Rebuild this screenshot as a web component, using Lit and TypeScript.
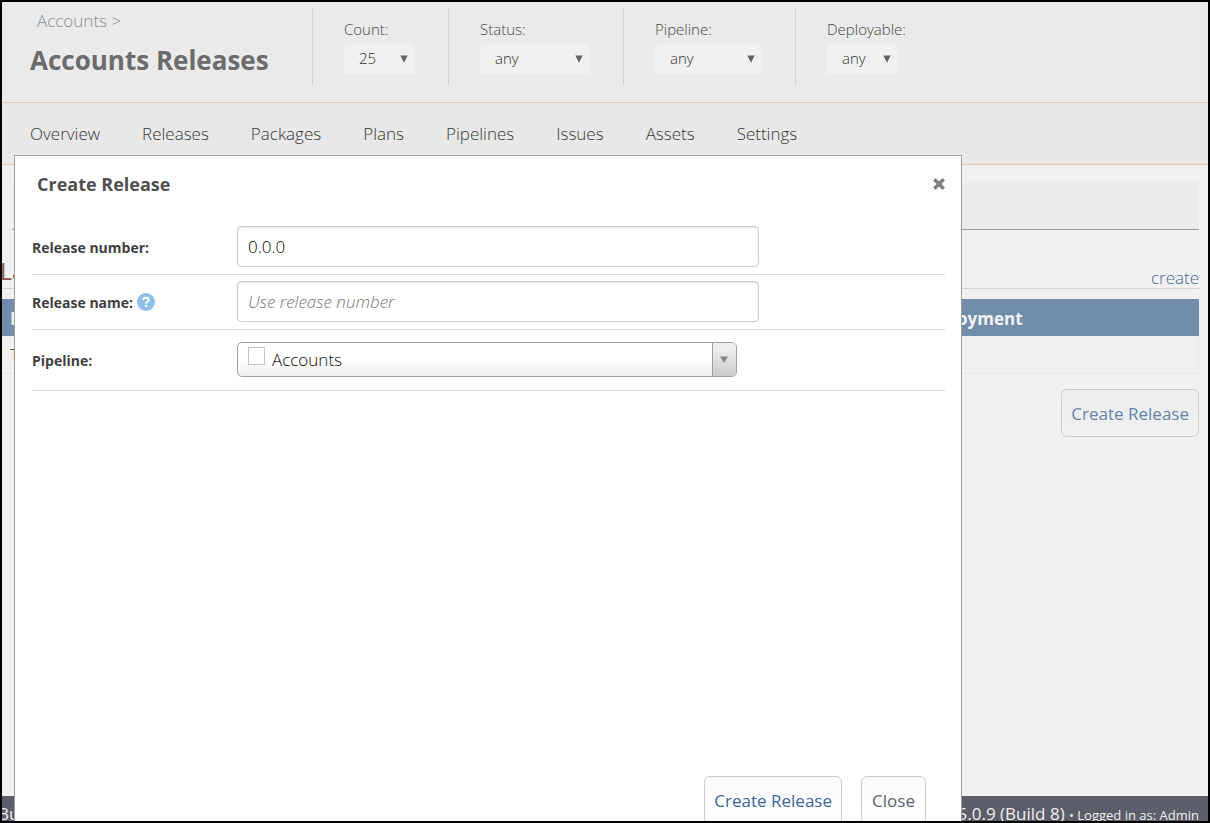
import { LitElement, html, css } from "lit";
import { customElement, property } from "lit/decorators.js";

interface Filter {
  id: string;
  label: string;
  value: string;
  size: string;
}

const FILTERS: Filter[] = [
  { id: "count", label: "Count:", value: "25", size: "s" },
  { id: "status", label: "Status:", value: "any", size: "l" },
  { id: "pipeline-filter", label: "Pipeline:", value: "any", size: "m" },
  { id: "deployable", label: "Deployable:", value: "any", size: "s" },
];

const TABS = ["Overview", "Releases", "Packages", "Plans", "Pipelines", "Issues", "Assets", "Settings"];

@customElement("release-dialog")
export class ReleaseDialog extends LitElement {
  static styles = css`
    :host {
      display: flex;
      flex-direction: column;
      box-sizing: border-box;
      background: #fff;
      border: 1px solid #a0a0a0;
      border-bottom: 0;
      padding: 11px 16px 0 17px;
      color: #3f3f3f;
      font-family: "Open Sans", "Noto Sans", sans-serif;
    }
    .head {
      display: flex;
      justify-content: space-between;
      align-items: center;
      height: 34px;
      padding-left: 5px;
      margin-bottom: 19px;
    }
    h2 {
      margin: 0;
      font-size: 18px;
      line-height: 24px;
      font-weight: 700;
      color: #505050;
    }
    button {
      font: inherit;
      cursor: pointer;
    }
    .x {
      display: flex;
      border: 0;
      padding: 0;
      background: none;
    }
    .row {
      display: grid;
      grid-template-columns: 205px minmax(0, 1fr);
      align-items: center;
      height: 54px;
      border-bottom: 1px solid #d9d9d9;
    }
    .row.tall {
      height: 60px;
    }
    .name {
      display: flex;
      align-items: center;
      gap: 4px;
      font-size: 14px;
      font-weight: 700;
    }
    .text {
      box-sizing: border-box;
      width: 100%;
      max-width: 522px;
      height: 41px;
      margin: 0 0 1px;
      padding: 0 10px;
      border: 1px solid #ccc;
      border-radius: 4px;
      box-shadow: inset 0 1px 2px #e4e4e4;
      font: 300 17px "Open Sans", sans-serif;
      color: #000;
      background: #fff;
    }
    .text::placeholder {
      font-style: italic;
      color: #777;
      opacity: 1;
    }
    .combo {
      display: flex;
      box-sizing: border-box;
      width: 100%;
      max-width: 500px;
      height: 35px;
      margin-bottom: 1px;
      border: 1px solid #a0a0a0;
      border-radius: 5px;
      overflow: hidden;
      background: linear-gradient(#fff 50%, #eee);
    }
    .combo input {
      appearance: none;
      box-sizing: border-box;
      width: 17px;
      height: 18px;
      margin: 4px 0 0 10px;
      border: 1px solid #c4c4c4;
      background: #fff;
    }
    .combo select {
      appearance: none;
      flex: 1;
      min-width: 0;
      border: 0;
      padding: 0 7px;
      background: none;
      font: 300 17px "Open Sans", sans-serif;
      color: #111;
    }
    .drop {
      display: flex;
      align-items: center;
      justify-content: center;
      box-sizing: border-box;
      width: 24px;
      padding-right: 2px;
      border-left: 1px solid #a0a0a0;
      background: linear-gradient(#eee 20%, #ccc);
      pointer-events: none;
    }
    .foot {
      display: flex;
      justify-content: flex-end;
      gap: 19px;
      margin-top: auto;
      padding-right: 19px;
    }
    .btn {
      height: 48px;
      min-width: 65px;
      padding: 0 9px;
      border: 1px solid #ccc;
      border-radius: 6px;
      background: linear-gradient(#fafafc, #fff);
      font-size: 17px;
      font-weight: 500;
      color: #5c636e;
      white-space: nowrap;
    }
    .btn.main {
      color: #3d6698;
    }
  `;

  render() {
    return html`
      <div class="head">
        <h2>Create Release</h2>
        <button class="x" aria-label="Close dialog">
          <svg width="12" height="12" viewBox="0 0 13 13">
            <path d="M2.7 2.7 10.3 10.3M10.3 2.7 2.7 10.3" stroke="#808080" stroke-width="3.8" stroke-linecap="square" />
          </svg>
        </button>
      </div>
      <div class="row">
        <label class="name" for="number">Release number:</label>
        <input class="text" id="number" type="text" value="0.0.0" />
      </div>
      <div class="row">
        <div class="name">
          <label for="name">Release name:</label>
          <svg width="18" height="18" viewBox="0 0 18 18" role="img" aria-label="Help">
            <circle cx="9" cy="9" r="9" fill="#8fbfe8" />
            <path d="M6.2 7C6.3 3.8 11.7 3.9 11.7 7 11.7 8.8 9.1 8.8 9.1 10.7" fill="none" stroke="#fff" stroke-width="2" />
            <circle cx="9.1" cy="13.1" r="1.3" fill="#fff" />
          </svg>
        </div>
        <input class="text" id="name" type="text" placeholder="Use release number" />
      </div>
      <div class="row tall">
        <label class="name" for="pipeline">Pipeline:</label>
        <div class="combo">
          <input type="checkbox" aria-label="Accounts" />
          <select id="pipeline">
            <option>Accounts</option>
          </select>
          <span class="drop">
            <svg width="8" height="7" viewBox="0 0 8 7"><path d="M0 .5H8L4 7Z" fill="#888" /></svg>
          </span>
        </div>
      </div>
      <div class="foot">
        <button class="btn main">Create Release</button>
        <button class="btn">Close</button>
      </div>
    `;
  }
}

@customElement("filter-select")
export class FilterSelect extends LitElement {
  @property({ attribute: false }) filter!: Filter;

  static styles = css`
    :host {
      display: block;
      box-sizing: border-box;
      height: 78px;
      padding: 13px 33px 0 31px;
      border-left: 1px solid #d4d4d4;
      font-family: "Open Sans", "Noto Sans", sans-serif;
      color: #484848;
    }
    label {
      display: block;
      font-size: 15px;
      line-height: 18px;
      font-weight: 300;
      margin-bottom: 6px;
    }
    .box {
      display: grid;
      align-items: center;
      height: 30px;
      border-radius: 4px;
      background: #f0f0f0;
    }
    .s {
      width: 71px;
    }
    .m {
      width: 107px;
    }
    .l {
      width: 110px;
    }
    select,
    svg {
      grid-area: 1 / 1;
    }
    select {
      appearance: none;
      width: 100%;
      height: 28px;
      align-self: start;
      border: 0;
      padding: 0 15px;
      background: none;
      font: 300 15px "Open Sans", sans-serif;
      color: #333;
    }
    svg {
      justify-self: end;
      margin-right: 7px;
      pointer-events: none;
    }
  `;

  render() {
    const f = this.filter;
    return html`
      <label for=${f.id}>${f.label}</label>
      <div class="box ${f.size}">
        <select id=${f.id}>
          <option>${f.value}</option>
        </select>
        <svg width="8" height="8" viewBox="0 0 8 8"><path d="M.3.5H7.7L4 7.8Z" fill="#636363" /></svg>
      </div>
    `;
  }
}

@customElement("app-root")
export class AppRoot extends LitElement {
  static styles = css`
    :host {
      display: block;
      font-family: "Open Sans", "Noto Sans", sans-serif;
      font-size: 17px;
      font-weight: 300;
    }
    .frame {
      position: relative;
      display: flex;
      flex-direction: column;
      box-sizing: border-box;
      height: 100vh;
      overflow: hidden;
      border: 2px solid #000;
      background: #f0f0f0;
    }
    header {
      display: flex;
      height: 100px;
      background: #eaeaea;
      border-bottom: 1px solid #f2c5b9;
    }
    .title {
      box-sizing: border-box;
      width: 310px;
      padding: 7px 0 0 28px;
    }
    .crumb {
      padding-left: 7px;
      line-height: 24px;
      color: #8e919b;
    }
    .crumb a {
      color: inherit;
      text-decoration: none;
    }
    h1 {
      margin: 9px 0 0;
      font-size: 26px;
      line-height: 36px;
      font-weight: 700;
      color: #6c6c6c;
      white-space: nowrap;
    }
    .filters {
      display: flex;
      padding-top: 5px;
    }
    nav {
      display: flex;
      gap: 42px;
      align-items: center;
      height: 61px;
      padding-left: 28px;
      background: #e8e8e8;
      border-bottom: 1px solid #f2c5b9;
    }
    nav a {
      color: #383838;
      text-decoration: none;
    }
    main {
      flex: 1;
      padding: 18px 9px 0 0;
    }
    .panel {
      height: 46px;
      margin-left: 10px;
      background: #eaeaea;
      border-bottom: 1px solid #98a3b0;
    }
    .section {
      display: flex;
      justify-content: space-between;
      align-items: flex-end;
      height: 58px;
      border-bottom: 1px solid #d4d4d4;
      margin-bottom: 10px;
    }
    .section h3 {
      margin: 0 0 0 -2px;
      font-size: 23px;
      line-height: 34px;
      font-weight: 400;
      color: #85564c;
    }
    .section a {
      line-height: 20px;
      color: #456b97;
      text-decoration: none;
    }
    table {
      width: 100%;
      border-collapse: collapse;
      table-layout: fixed;
    }
    th {
      height: 36px;
      padding: 1px 8px 0;
      background: #708dab;
      color: #f2f2f2;
      text-align: left;
      font-size: 17px;
      font-weight: 700;
    }
    th:last-child {
      width: 272px;
    }
    td {
      height: 37px;
      padding: 0 8px;
      color: #333;
      border-bottom: 1px solid #e8e8e8;
    }
    td:last-child {
      border-right: 1px solid #e8e8e8;
    }
    .actions {
      display: flex;
      justify-content: flex-end;
      padding-top: 15px;
    }
    .create {
      height: 48px;
      padding: 0 9px;
      border: 1px solid #ccc;
      border-radius: 6px;
      background: linear-gradient(#ededed, #f0f0f0);
      font: 500 17px "Open Sans", sans-serif;
      color: #6485aa;
    }
    footer {
      display: flex;
      justify-content: space-between;
      box-sizing: border-box;
      height: 25px;
      padding: 6px 9px 0 0;
      line-height: 24px;
      font-weight: 400;
      background: #5c5e69;
      color: #eee;
    }
    footer small {
      font-size: 13px;
    }
    .lead {
      margin-left: -4px;
    }
    release-dialog {
      position: absolute;
      top: 153px;
      bottom: -3px;
      left: 12px;
      width: calc(100% - 12px);
      max-width: 948px;
    }
  `;

  render() {
    return html`
      <div class="frame">
        <header>
          <div class="title">
            <div class="crumb"><a href="#accounts">Accounts</a> &gt;</div>
            <h1>Accounts Releases</h1>
          </div>
          <div class="filters">${FILTERS.map((f) => html`<filter-select .filter=${f}></filter-select>`)}</div>
        </header>
        <nav>${TABS.map((t) => html`<a href="#${t.toLowerCase()}">${t}</a>`)}</nav>
        <main>
          <div class="panel"></div>
          <div class="section">
            <h3>Latest</h3>
            <a href="#create">create</a>
          </div>
          <table>
            <thead>
              <tr><th>Release</th><th>Deployment</th></tr>
            </thead>
            <tbody>
              <tr><td>There are no releases.</td><td></td></tr>
            </tbody>
          </table>
          <div class="actions"><button class="create">Create Release</button></div>
        </main>
        <footer>
          <span class="lead">BuildMaster</span>
          <span>5.0.9 (Build 8) <small>• Logged in as: Admin</small></span>
        </footer>
        <release-dialog role="dialog" aria-label="Create Release"></release-dialog>
      </div>
    `;
  }
}
